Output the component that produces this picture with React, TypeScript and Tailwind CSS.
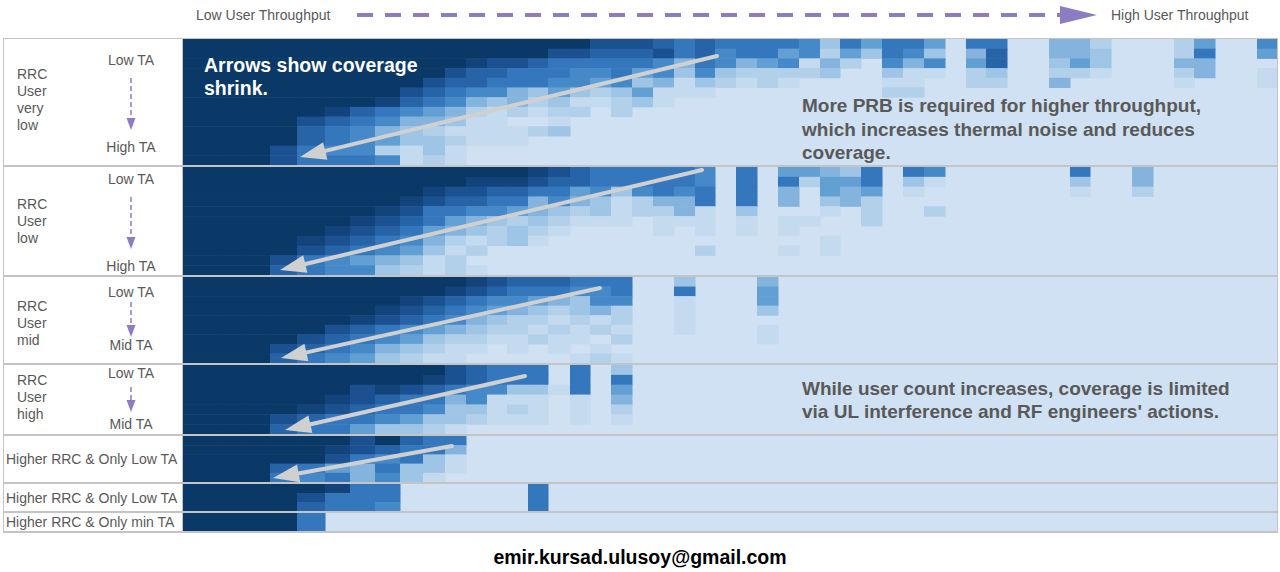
import React from "react";

// heat levels, light -> navy
const PAL: Record<string, string> = {
  "0": "#cfe1f2",
  "1": "#c3daef",
  "2": "#b3d0eb",
  "3": "#9fc5e6",
  "4": "#84b4de",
  "5": "#62a0d4",
  "6": "#4689c9",
  "7": "#3577bd",
  "8": "#2764a7",
  "9": "#1b5091",
  a: "#12437b",
  b: "#0a3867",
};

// column edges in page x
const B = [
  183, 216, 243, 270, 297, 325, 350, 375, 400, 423, 445, 466, 487, 507, 528, 548, 570, 590, 611, 632,
  653, 674, 695, 715, 736, 757, 778, 799, 820, 840, 861, 882, 903, 924, 945, 966, 986, 1007, 1028,
  1049, 1070, 1090, 1111, 1132, 1153, 1174, 1194, 1215, 1236, 1257, 1277,
];

const S1 = [
  "bbbbbbbbbb" + "bbbbbbb999" + "8787777637" + "5775077004" + "4200025006",
  "bbbbbbbbbb" + "bbbbb99888" + "9786775625" + "3763048004" + "4300027005",
  "bbbbbbbbbb" + "ba99877777" + "6476456142" + "0646058003" + "5300044000",
  "bbbbbbbbbb" + "9887776675" + "6363222230" + "0311023002" + "2100024001",
  "bbbbbbbbb9" + "8877766563" + "4132121000" + "0110022004" + "0000010001",
  "bbbbbbbb98" + "7664353235" + "1110000000" + "0220000000",
  "bbbbbbba87" + "6434231123" + "1",
  "bbbbba8765" + "4212122020",
  "bbbb987644" + "3110010000",
  "bbbb876432" + "1111230000",
  "bbbb876533" + "2111",
  "bbb9766213" + "1",
  "bbb9777612" + "1",
];

const S2 = [
  "bbbbbbbbbb" + "bbbba98777" + "7760705543" + "7076000000" + "7004",
  "bbbbbbbbbb" + "baaa988777" + "7760707255" + "7031000000" + "3004",
  "bbbbbbbbba" + "9988775636" + "7670704054" + "5010000000" + "1002",
  "bbbbbbbba9" + "8877464312" + "4470704034" + "2",
  "bbbbbbba97" + "7665432312" + "2410300010" + "2002",
  "bbbbbba987" + "5432321110" + "1110101100" + "2",
  "bbbbba9875" + "4323210000" + "1010101",
  "bbbba98764" + "2123100000" + "000000001",
  "bbbb987653" + "1200000000" + "002000101",
  "bbb9765431" + "2",
  "bbb8766321" + "21",
];

const S3 = [
  "bbbbbbbbbb" + "ba98887770" + "030004",
  "bbbbbbbbbb" + "a987776670" + "070005",
  "bbbbbbbba9" + "8766543660" + "010005",
  "bbbbbbba98" + "7654323420" + "010003",
  "bbbbbba987" + "6432212120" + "01",
  "bbbbb98765" + "4322121210" + "010001",
  "bbbb987653" + "2211211020" + "000001",
  "bbb9876432" + "11010101",
  "bbb8765321" + "100000121",
];

const S4 = [
  "bbbbbbbbbb" + "987770703",
  "bbbbbbbbba" + "987770707",
  "bbbbbb9a98" + "766331705",
  "bbbbba9877" + "461110104",
  "bbbba98776" + "331210102",
  "bbb9877653" + "321110101",
  "bbb8775332" + "1",
];

const S5 = ["bbbbbb9b87" + "7", "bbbbba9877" + "4", "bbbbb97673" + "1", "bbb8754733" + "1", "bbb7674631"];

const S6 = ["bbbbba7700" + "00007", "bbbb977700" + "00007", "bbbb877600" + "00007"];

const S7 = ["bbbb7", "bbbb7"];

// grey arrows, page coords [fromX, fromY, tipX, tipY]
const SHRINK = [
  [717, 56, 300, 157],
  [702, 170, 280, 270],
  [600, 288, 281, 358],
  [525, 376, 285, 430],
  [452, 446, 273, 478],
];

function Heat({ rows, h }: { rows: string[]; h: number }) {
  const rh = h / rows.length;
  return (
    <svg width={1094} height={h} className="block shrink-0">
      <rect width={1094} height={h} fill={PAL["0"]} />
      {rows.map((row, r) =>
        row.split("").map((ch, c) =>
          ch === "0" || c >= 50 ? null : (
            <rect
              key={`${r}-${c}`}
              x={B[c] - 183}
              y={r * rh}
              width={B[c + 1] - B[c] + 0.5}
              height={rh + 0.5}
              fill={PAL[ch]}
            />
          )
        )
      )}
    </svg>
  );
}

function DownArrow({ len }: { len: number }) {
  return (
    <svg width="10" height={len} className="block">
      <line x1="5" y1="0" x2="5" y2={len - 12} stroke="#8e7cc3" strokeWidth="1.5" strokeDasharray="5 3" />
      <polygon points={`0.5,${len - 12} 9.5,${len - 12} 5,${len}`} fill="#8e7cc3" />
    </svg>
  );
}

function RrcLabel({
  lines,
  end,
  len,
  colClass,
  textClass,
}: {
  lines: string[];
  end: string;
  len: number;
  colClass: string;
  textClass: string;
}) {
  return (
    <div className="flex w-[179px] shrink-0 border-r border-[#c4c4c4] bg-white text-[14px]">
      <div className={`w-[76px] pl-[13px] leading-[17px] ${textClass}`}>
        {lines.map((l) => (
          <div key={l}>{l}</div>
        ))}
      </div>
      <div className={`flex flex-1 flex-col items-center justify-between leading-[15px] ${colClass}`}>
        <span>Low TA</span>
        <DownArrow len={len} />
        <span>{end}</span>
      </div>
    </div>
  );
}

function PlainLabel({ text }: { text: string }) {
  return (
    <div className="flex w-[179px] shrink-0 items-center whitespace-nowrap border-r border-[#c4c4c4] bg-white pl-[2px] text-[14px] leading-[16px]">
      {text}
    </div>
  );
}

function arrowParts(x1: number, y1: number, x2: number, y2: number) {
  const dx = x2 - x1;
  const dy = y2 - y1;
  const l = Math.hypot(dx, dy);
  const ux = dx / l;
  const uy = dy / l;
  const bx = x2 - 26 * ux;
  const by = y2 - 26 * uy;
  const nx = -uy;
  const ny = ux;
  return {
    end: [bx + 2 * ux, by + 2 * uy],
    head: `${x2},${y2} ${bx + 9 * nx},${by + 9 * ny} ${bx - 9 * nx},${by - 9 * ny}`,
  };
}

export default function App() {
  return (
    <div className="h-[572px] w-[1280px] overflow-hidden bg-white font-['Liberation_Sans',Arial,sans-serif] text-[#595959]">
      {/* throughput axis */}
      <div className="flex h-[38px] items-center pb-[8px] text-[14px] leading-[16px]">
        <div className="w-[357px] shrink-0 whitespace-nowrap pl-[196px]">Low User Throughput</div>
        <svg width="740" height="18" className="block shrink-0">
          <line x1="0" y1="9" x2="703" y2="9" stroke="#8e7cc3" strokeWidth="4" strokeDasharray="16 12" />
          <polygon points="703,0 740,9 703,18" fill="#8e7cc3" />
        </svg>
        <div className="whitespace-nowrap pl-[14px]">High User Throughput</div>
      </div>

      {/* table */}
      <div className="relative ml-[3px] w-[1275px] border-x border-b-2 border-t border-[#c4c4c4]">
        <div className="flex h-[126px]">
          <RrcLabel
            lines={["RRC", "User", "very", "low"]}
            end="High TA"
            len={52}
            colClass="pt-[14px] pb-[10px]"
            textClass="self-center mb-[5px]"
          />
          <Heat rows={S1} h={126} />
        </div>
        <div className="flex h-[110px] border-t-2 border-[#c4c4c4]">
          <RrcLabel
            lines={["RRC", "User", "low"]}
            end="High TA"
            len={52}
            colClass="pt-[5px] pb-[1px]"
            textClass="self-center"
          />
          <Heat rows={S2} h={108} />
        </div>
        <div className="flex h-[88px] border-t-2 border-[#c4c4c4]">
          <RrcLabel
            lines={["RRC", "User", "mid"]}
            end="Mid TA"
            len={35}
            colClass="pt-[8px] pb-[10px]"
            textClass="self-center mt-[6px]"
          />
          <Heat rows={S3} h={86} />
        </div>
        <div className="flex h-[71px] border-t-2 border-[#c4c4c4]">
          <RrcLabel
            lines={["RRC", "User", "high"]}
            end="Mid TA"
            len={25}
            colClass="pt-[1px] pb-[2px]"
            textClass="self-center mb-[5px]"
          />
          <Heat rows={S4} h={69} />
        </div>
        <div className="flex h-[48px] border-t-2 border-[#c4c4c4]">
          <PlainLabel text="Higher RRC & Only Low TA" />
          <Heat rows={S5} h={46} />
        </div>
        <div className="flex h-[29px] border-t-2 border-[#c4c4c4]">
          <PlainLabel text="Higher RRC & Only Low TA" />
          <Heat rows={S6} h={27} />
        </div>
        <div className="flex h-[20px] border-t-2 border-[#c4c4c4]">
          <PlainLabel text="Higher RRC & Only min TA" />
          <Heat rows={S7} h={18} />
        </div>

        {/* coverage-shrink arrows */}
        <svg width="1094" height="494" className="pointer-events-none absolute left-[179px] top-0">
          {SHRINK.map(([x1, y1, x2, y2], i) => {
            const ax1 = x1 - 183;
            const ay1 = y1 - 39;
            const ax2 = x2 - 183;
            const ay2 = y2 - 39;
            const p = arrowParts(ax1, ay1, ax2, ay2);
            return (
              <g key={i}>
                <line x1={ax1} y1={ay1} x2={p.end[0]} y2={p.end[1]} stroke="#d0d0d0" strokeWidth="4" strokeLinecap="round" />
                <polygon points={p.head} fill="#d0d0d0" />
              </g>
            );
          })}
        </svg>

        <div className="absolute left-[200px] top-[15px] whitespace-nowrap text-[19.5px] font-bold leading-[23px] text-white">
          Arrows show coverage
          <br />
          shrink.
        </div>
        <div className="absolute left-[798px] top-[55px] whitespace-nowrap text-[19px] font-bold leading-[23.5px] text-[#595959]">
          More PRB is required for higher throughput,
          <br />
          which increases thermal noise and reduces
          <br />
          coverage.
        </div>
        <div className="absolute left-[798px] top-[338px] whitespace-nowrap text-[19px] font-bold leading-[23px] text-[#595959]">
          While user count increases, coverage is limited
          <br />
          via UL interference and RF engineers' actions.
        </div>
      </div>

      <div className="flex h-[39px] items-center justify-center pt-[9px] text-[19.5px] font-bold leading-[24px] text-black">
        emir.kursad.ulusoy@gmail.com
      </div>
    </div>
  );
}
